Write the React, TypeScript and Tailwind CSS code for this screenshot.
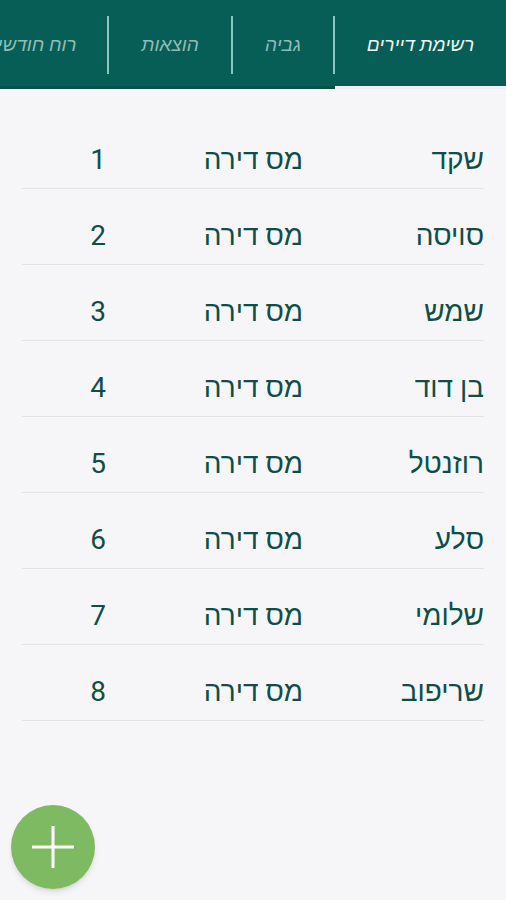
import React from "react";

const tabs = [
  { label: "רשימת דיירים", width: "w-[171px]", active: true },
  { label: "גביה", width: "w-[100px]", active: false },
  { label: "הוצאות", width: "w-[122px]", active: false },
  { label: "רוח חודשי", width: "w-[140px]", active: false },
];

const tenants = [
  { name: "שקד", type: "מס דירה", num: 1 },
  { name: "סויסה", type: "מס דירה", num: 2 },
  { name: "שמש", type: "מס דירה", num: 3 },
  { name: "בן דוד", type: "מס דירה", num: 4 },
  { name: "רוזנטל", type: "מס דירה", num: 5 },
  { name: "סלע", type: "מס דירה", num: 6 },
  { name: "שלומי", type: "מס דירה", num: 7 },
  { name: "שריפוב", type: "מס דירה", num: 8 },
];

const TabBar = () => {
  return (
    <div className="flex h-[89px] overflow-hidden bg-[#075e57]">
      {tabs.map((tab, i) => (
        <React.Fragment key={tab.label}>
          {i > 0 && (
            <div className="flex w-[2px] shrink-0 flex-col">
              <div className="flex h-[86px] items-center pt-[4px]">
                <div className="h-[58px] w-[2px] bg-[#8cc7bf]" />
              </div>
              <div className="h-[3px] bg-[#0a4e48]" />
            </div>
          )}
          <div className={`flex shrink-0 flex-col ${tab.width}`}>
            <div
              className={`flex h-[86px] items-center justify-center whitespace-nowrap pt-[5px] text-[19px] italic ${
                tab.active ? "text-[#eef6f4]" : "text-[#8fbdb6]"
              }`}
            >
              {tab.label}
            </div>
            <div
              className={`h-[3px] ${tab.active ? "bg-[#eef0f2]" : "bg-[#0a4e48]"}`}
            />
          </div>
        </React.Fragment>
      ))}
    </div>
  );
};

export default function App() {
  return (
    <div
      dir="rtl"
      className="relative min-h-[900px] bg-[#f6f6f8] font-['Roboto','Noto_Sans','Liberation_Sans',sans-serif]"
    >
      <TabBar />

      <div className="px-[22px] pt-[24px]">
        {tenants.map((t) => (
          <div
            key={t.num}
            className="flex h-[76px] items-center border-b border-[#e4e4e6] pt-[18px] text-[28px] text-[#0d4f48]"
          >
            <div className="w-[181px] text-right">{t.name}</div>
            <div className="w-[129px] text-right">{t.type}</div>
            <div className="flex-1 text-center">{t.num}</div>
          </div>
        ))}
      </div>

      <button
        type="button"
        className="absolute left-[11px] top-[805px] flex h-[84px] w-[84px] items-center justify-center rounded-full bg-[#7dba61] shadow-md"
      >
        <svg width="46" height="46" viewBox="0 0 46 46">
          <path d="M23 2v42M2 23h42" stroke="#fff" strokeWidth="3" />
        </svg>
      </button>
    </div>
  );
}
